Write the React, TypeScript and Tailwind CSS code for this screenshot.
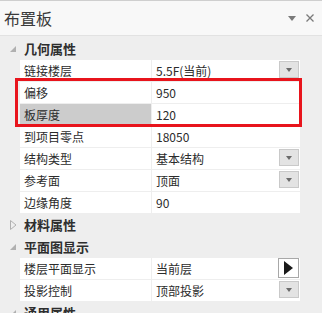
import React from "react";

const font = { fontFamily: '"Noto Sans CJK SC", "Noto Sans", sans-serif' };

function DropBtn() {
  return (
    <div className="absolute right-[1px] top-[1px] w-[20px] h-[17px] bg-[#e3e3e3] border border-[#c9c9c9] flex items-center justify-center">
      <svg width="6" height="4" viewBox="0 0 6 4"><path d="M0 0h6L3 4z" fill="#6a6a6a" /></svg>
    </div>
  );
}

function PlayBtn() {
  return (
    <div className="absolute right-[1px] top-[0px] w-[21px] h-[20px] bg-white border border-[#a8a8a8] flex items-center justify-center">
      <svg width="9" height="14" viewBox="0 0 9 14"><path d="M0 0L9 7L0 14z" fill="#1a1a1a" /></svg>
    </div>
  );
}

function Row({ label, value, btn, selected }: { label: string; value: string; btn?: "drop" | "play"; selected?: boolean }) {
  return (
    <div className="flex h-[22px] pb-[1px] pl-[20px] pr-[22px]">
      <div className={`w-[131px] flex items-center pl-[4px] text-[12px] text-[#2b2b2b] ${selected ? "bg-[#cccccc]" : "bg-white"}`}>{label}</div>
      <div className="w-[1px]" />
      <div className="relative flex-1 bg-white flex items-center pl-[4px] text-[12px] text-[#2b2b2b]">
        {value}
        {btn === "drop" && <DropBtn />}
        {btn === "play" && <PlayBtn />}
      </div>
    </div>
  );
}

function Header({ title, open }: { title: string; open: boolean }) {
  return (
    <div className="flex items-center h-[22px] pl-[10px]">
      <div className="w-[14px] flex items-center">
        {open ? (
          <svg width="6" height="6" viewBox="0 0 6 6"><path d="M6 0V6H0z" fill="#b0b0b0" /></svg>
        ) : (
          <svg width="7" height="10" viewBox="0 0 7 10"><path d="M0.5 0.5L6 5L0.5 9.5z" fill="none" stroke="#b0b0b0" /></svg>
        )}
      </div>
      <div className="text-[13px] font-bold text-[#2e2e2e]">{title}</div>
    </div>
  );
}

export default function App() {
  return (
    <div className="relative w-[322px] h-[313px] overflow-hidden bg-[#eeeeee]" style={font}>
      <div className="h-[36px] bg-[#f8f8f8] border-t border-[#cfcfcf] border-b border-b-[#e2e2e2] flex items-center pl-[4px] pr-[8px]">
        <div className="text-[16px] text-[#3a3a3a] flex-1">布置板</div>
        <svg width="8" height="5" viewBox="0 0 8 5" className="mr-[10px]"><path d="M0 0h8L4 5z" fill="#7a7a7a" /></svg>
        <svg width="8" height="8" viewBox="0 0 8 8"><path d="M0.5 0.5L7.5 7.5M7.5 0.5L0.5 7.5" stroke="#7a7a7a" strokeWidth="1.3" /></svg>
      </div>
      <div className="pt-[2px]">
        <Header title="几何属性" open />
        <Row label="链接楼层" value="5.5F(当前)" btn="drop" />
        <Row label="偏移" value="950" />
        <Row label="板厚度" value="120" selected />
        <Row label="到项目零点" value="18050" />
        <Row label="结构类型" value="基本结构" btn="drop" />
        <Row label="参考面" value="顶面" btn="drop" />
        <Row label="边缘角度" value="90" />
        <Header title="材料属性" open={false} />
        <Header title="平面图显示" open />
        <Row label="楼层平面显示" value="当前层" btn="play" />
        <Row label="投影控制" value="顶部投影" btn="drop" />
        <Header title="通用属性" open />
      </div>
      <div className="absolute left-[15px] top-[78px] w-[287px] h-[49px] border-[3px] border-[#e8141c] pointer-events-none" />
    </div>
  );
}
